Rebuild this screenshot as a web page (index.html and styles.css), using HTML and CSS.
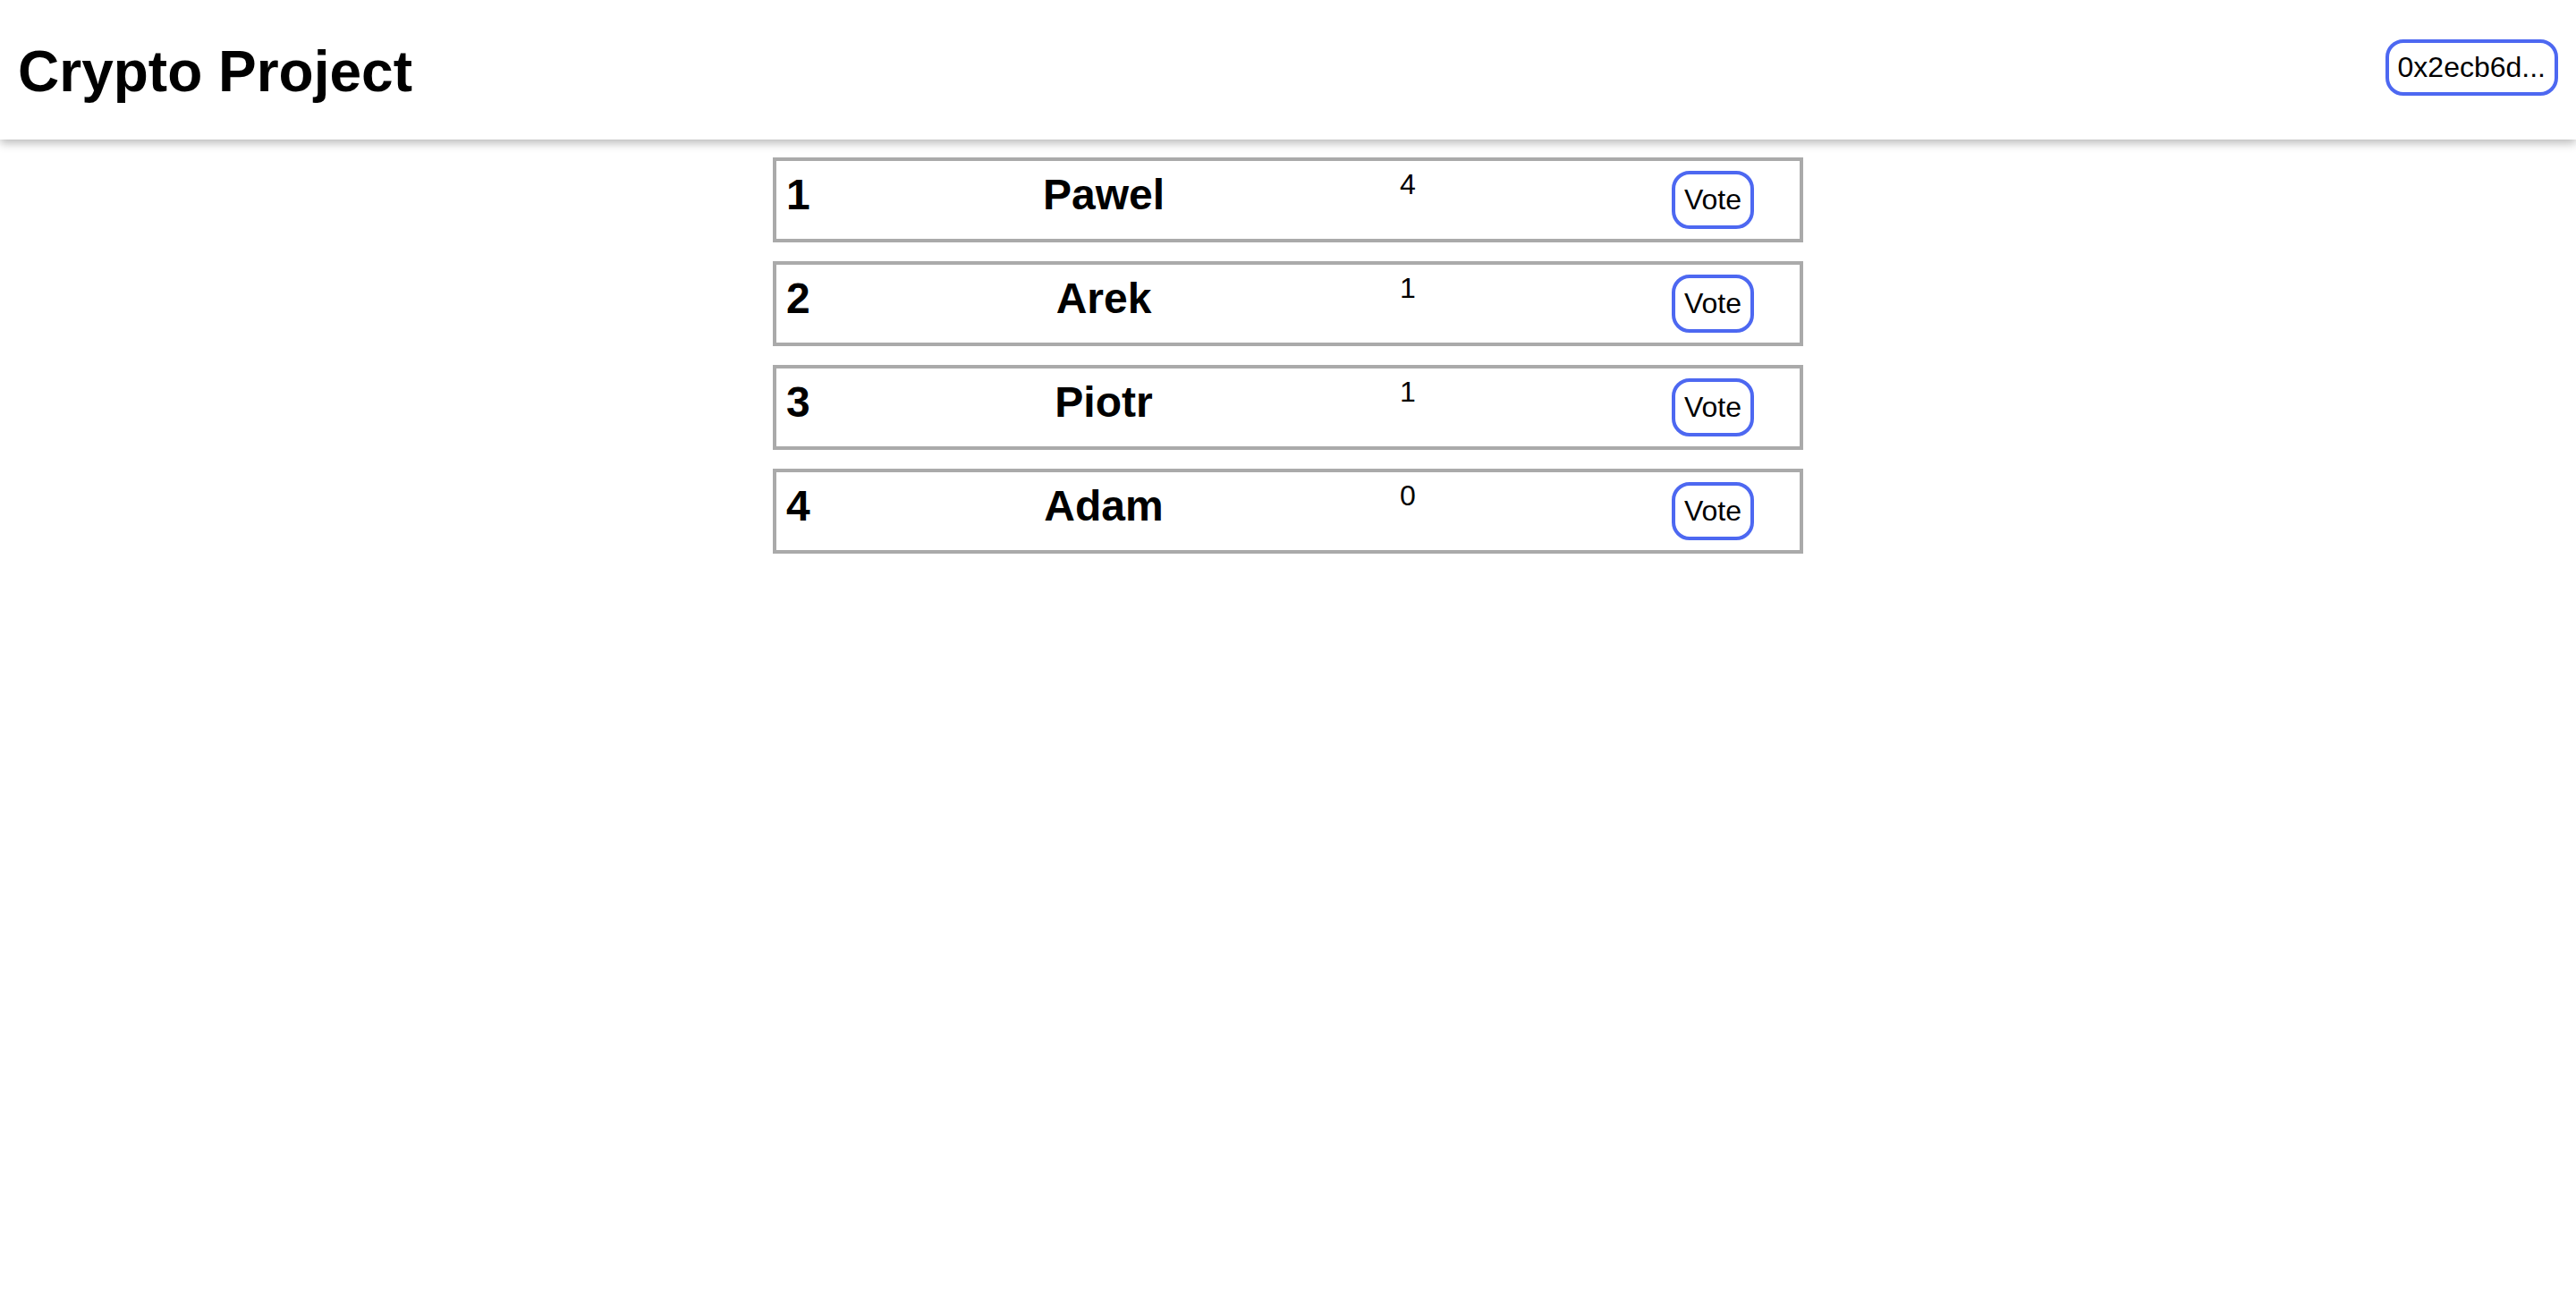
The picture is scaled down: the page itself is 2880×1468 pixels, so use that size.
FILE: index.html
```html
<!DOCTYPE html>
<html lang="en">
<head>
<meta charset="utf-8">
<title>Crypto Project</title>
<link rel="stylesheet" href="styles.css">
</head>
<body>
  <header class="topbar">
    <h1 class="title">Crypto Project</h1>
    <button class="wallet">0x2ecb6d...</button>
  </header>
  <main class="list">
    <div class="row">
      <h2 class="num">1</h2>
      <h2 class="name">Pawel</h2>
      <p class="count">4</p>
      <button class="vote">Vote</button>
    </div>
    <div class="row">
      <h2 class="num">2</h2>
      <h2 class="name">Arek</h2>
      <p class="count">1</p>
      <button class="vote">Vote</button>
    </div>
    <div class="row">
      <h2 class="num">3</h2>
      <h2 class="name">Piotr</h2>
      <p class="count">1</p>
      <button class="vote">Vote</button>
    </div>
    <div class="row">
      <h2 class="num">4</h2>
      <h2 class="name">Adam</h2>
      <p class="count">0</p>
      <button class="vote">Vote</button>
    </div>
  </main>
</body>
</html>
```

FILE: styles.css
```css
* {
  box-sizing: border-box;
}

html, body {
  margin: 0;
  padding: 0;
  background: #ffffff;
  color: #000000;
  font-family: "Liberation Sans", Arial, Helvetica, sans-serif;
}

.topbar {
  height: 156px;
  display: flex;
  align-items: center;
  justify-content: space-between;
  padding: 0 20px 0 20px;
  background: #ffffff;
  box-shadow: 0 4px 10px rgba(0, 0, 0, 0.28);
  position: relative;
  z-index: 1;
}

.title {
  margin: 4px 0 0 0;
  font-size: 64px;
  font-weight: bold;
  line-height: 74px;
}

.wallet,
.vote {
  font-family: "Liberation Sans", Arial, Helvetica, sans-serif;
  font-size: 32px;
  line-height: 37px;
  color: #000000;
  background: #ffffff;
  border: 4px solid #4d68f1;
  border-radius: 20px;
  padding: 10px 10px;
  margin: 0;
  cursor: pointer;
}

.wallet {
  padding: 9px 10px;
  margin-top: -5px;
}

.list {
  display: flex;
  flex-direction: column;
  align-items: center;
  gap: 21px;
  padding-top: 20px;
}

.row {
  width: 40%;
  height: 95px;
  border: 4px solid #aaaaaa;
  display: grid;
  grid-template-columns: 233px 244px 436px 169px;
  align-items: start;
  padding: 10px 0 0 11px;
}

.num,
.name {
  margin: 0;
  font-size: 48px;
  font-weight: bold;
  line-height: 55px;
}

.name {
  text-align: center;
}

.count {
  margin: -2px 0 0 0;
  font-size: 32px;
  line-height: 37px;
  text-align: center;
}

.vote {
  justify-self: end;
  margin-top: 1px;
}
```
